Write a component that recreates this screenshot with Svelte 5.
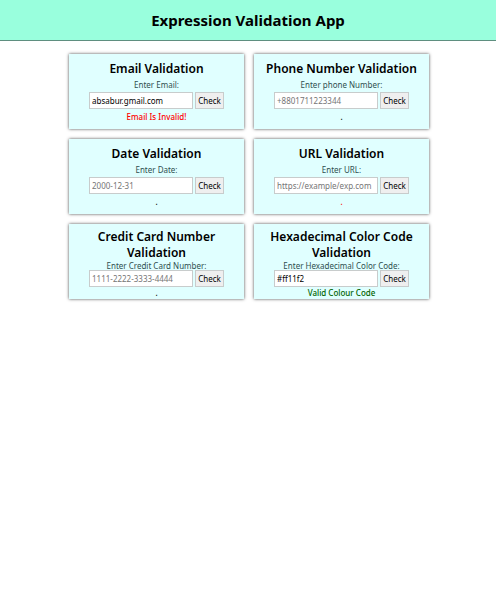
<script>
  let checks = $state([
    { id: 'email', title: 'Email Validation', label: 'Enter Email:', hint: '', value: 'absabur.gmail.com', message: 'Email Is Invalid!', tone: 'bad' },
    { id: 'phone', title: 'Phone Number Validation', label: 'Enter phone Number:', hint: '+8801711223344', value: '', message: '.', tone: '' },
    { id: 'date', title: 'Date Validation', label: 'Enter Date:', hint: '2000-12-31', value: '', message: '.', tone: '' },
    { id: 'url', title: 'URL Validation', label: 'Enter URL:', hint: 'https://example/exp.com', value: '', message: '.', tone: 'bad' },
    { id: 'card', title: 'Credit Card Number Validation', label: 'Enter Credit Card Number:', hint: '1111-2222-3333-4444', value: '', message: '.', tone: '', compact: true },
    { id: 'color', title: 'Hexadecimal Color Code Validation', label: 'Enter Hexadecimal Color Code:', hint: '', value: '#ff11f2', message: 'Valid Colour Code', tone: 'good', compact: true },
  ]);
</script>

<header>
  <h1>Expression Validation App</h1>
</header>
<main>
  {#each checks as check (check.id)}
    <form class="card" class:compact={check.compact} onsubmit={(e) => e.preventDefault()}>
      <h2>{check.title}</h2>
      <label for={check.id}>{check.label}</label>
      <div class="entry">
        <input id={check.id} type="text" placeholder={check.hint} bind:value={check.value} />
        <button type="submit">Check</button>
      </div>
      <p class={check.tone}>{check.message}</p>
    </form>
  {/each}
</main>

<style>
  :global(body) {
    margin: 0;
    background: #fff;
    font-family: "Segoe UI", "Noto Sans", "Open Sans", sans-serif;
    color: #000;
  }

  header {
    padding: 10px;
    background: #99ffdd;
    border-bottom: 1px solid #5f8f80;
    text-align: center;
  }

  h1 {
    margin: 0;
    font-size: 15px;
    line-height: 20px;
  }

  main {
    display: grid;
    grid-template-columns: repeat(auto-fit, 175px);
    justify-content: center;
    gap: 10px;
    max-width: 370px;
    margin: 0 auto;
    padding: 13px 0 13px 2px;
  }

  .card {
    box-sizing: border-box;
    min-height: 75px;
    display: flex;
    flex-direction: column;
    align-items: center;
    gap: 2px;
    padding: 7px 5px 0;
    background: #e0ffff;
    box-shadow: 0 0 3px #000000b3;
    text-align: center;
  }

  .compact {
    gap: 0;
    padding-top: 5px;
  }

  h2 {
    margin: 0;
    font-size: 12px;
    font-weight: 600;
    line-height: 16px;
  }

  label {
    font-size: 8px;
    line-height: 11px;
    color: #2f4f4f;
  }

  .compact label {
    line-height: 9px;
  }

  .entry {
    display: flex;
    gap: 2px;
  }

  input,
  button {
    box-sizing: border-box;
    height: 17px;
    margin: 0;
    border: 1px solid #c8cccc;
    border-radius: 0;
    font-family: inherit;
    font-size: 8px;
    line-height: 12px;
    color: #000;
  }

  input {
    width: 104px;
    padding: 0 2px;
    background: #fff;
  }

  input::placeholder {
    color: #757575;
    opacity: 1;
  }

  button {
    width: 29px;
    padding: 0;
    background: #efefef;
  }

  p {
    margin: 0;
    font-size: 8px;
    font-weight: 500;
    line-height: 11px;
  }

  .bad {
    color: #ff0000;
  }

  .good {
    color: #006400;
  }
</style>
